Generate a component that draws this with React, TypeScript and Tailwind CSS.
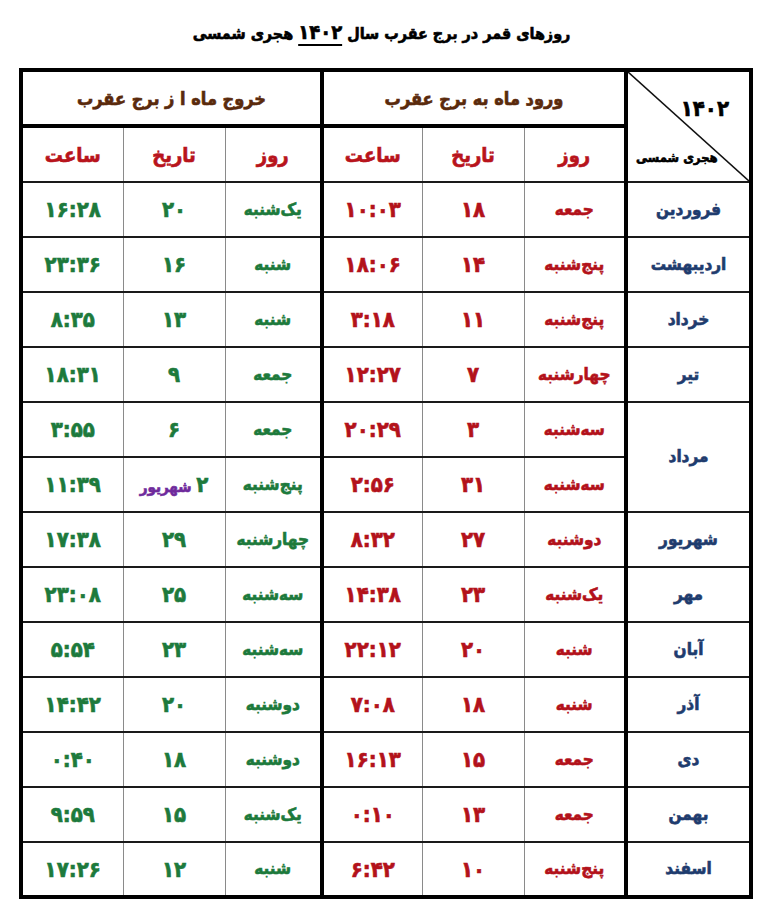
import React from "react";

type Row = {
  month?: string;
  span?: number;
  inDay: string;
  inDate: string;
  inTime: string;
  outDay: string;
  outDate: string;
  outTime: string;
  outDateNote?: string;
};

const ROWS: Row[] = [
  { month: "فروردین", inDay: "جمعه", inDate: "۱۸", inTime: "۱۰:۰۳", outDay: "یک‌شنبه", outDate: "۲۰", outTime: "۱۶:۲۸" },
  { month: "اردیبهشت", inDay: "پنج‌شنبه", inDate: "۱۴", inTime: "۱۸:۰۶", outDay: "شنبه", outDate: "۱۶", outTime: "۲۳:۳۶" },
  { month: "خرداد", inDay: "پنج‌شنبه", inDate: "۱۱", inTime: "۳:۱۸", outDay: "شنبه", outDate: "۱۳", outTime: "۸:۳۵" },
  { month: "تیر", inDay: "چهارشنبه", inDate: "۷", inTime: "۱۲:۲۷", outDay: "جمعه", outDate: "۹", outTime: "۱۸:۳۱" },
  { month: "مرداد", span: 2, inDay: "سه‌شنبه", inDate: "۳", inTime: "۲۰:۲۹", outDay: "جمعه", outDate: "۶", outTime: "۳:۵۵" },
  { inDay: "سه‌شنبه", inDate: "۳۱", inTime: "۲:۵۶", outDay: "پنج‌شنبه", outDate: "۲", outDateNote: "شهریور", outTime: "۱۱:۳۹" },
  { month: "شهریور", inDay: "دوشنبه", inDate: "۲۷", inTime: "۸:۳۲", outDay: "چهارشنبه", outDate: "۲۹", outTime: "۱۷:۳۸" },
  { month: "مهر", inDay: "یک‌شنبه", inDate: "۲۳", inTime: "۱۴:۳۸", outDay: "سه‌شنبه", outDate: "۲۵", outTime: "۲۳:۰۸" },
  { month: "آبان", inDay: "شنبه", inDate: "۲۰", inTime: "۲۲:۱۲", outDay: "سه‌شنبه", outDate: "۲۳", outTime: "۵:۵۴" },
  { month: "آذر", inDay: "شنبه", inDate: "۱۸", inTime: "۷:۰۸", outDay: "دوشنبه", outDate: "۲۰", outTime: "۱۴:۴۲" },
  { month: "دی", inDay: "جمعه", inDate: "۱۵", inTime: "۱۶:۱۳", outDay: "دوشنبه", outDate: "۱۸", outTime: "۰:۴۰" },
  { month: "بهمن", inDay: "جمعه", inDate: "۱۳", inTime: "۰:۱۰", outDay: "یک‌شنبه", outDate: "۱۵", outTime: "۹:۵۹" },
  { month: "اسفند", inDay: "پنج‌شنبه", inDate: "۱۰", inTime: "۶:۴۲", outDay: "شنبه", outDate: "۱۲", outTime: "۱۷:۲۶" },
];

const FONT = "[font-family:'DejaVu_Sans_Condensed','DejaVu_Sans',sans-serif]";
// heavier look, the original uses a very black display face
const HEAVY = "[-webkit-text-stroke-width:0.6px]";

export default function App() {
  const cell = "border-b-2 border-b-[#1a1a1a] border-l border-l-[#8a8a8a] text-center align-middle p-0";

  return (
    <div dir="rtl" className={`bg-white w-[763px] h-[900px] ${FONT} ${HEAVY} font-bold`}>
      {/* Title */}
      <div className="h-[68px] flex items-center justify-center pb-[4px]">
        <h1 className="text-[16px] text-black tracking-tight">
          روزهای قمر در برج عقرب سال{" "}
          <span className="underline underline-offset-[5px] decoration-2 text-[20px]">۱۴۰۲</span>{" "}
          هجری شمسی
        </h1>
      </div>

      <table className="mr-[10px] w-[730px] table-fixed border-collapse border-4 border-black">
        <colgroup>
          <col className="w-[125px]" />
          <col className="w-[102px]" />
          <col className="w-[102px]" />
          <col className="w-[100px]" />
          <col className="w-[97px]" />
          <col className="w-[102px]" />
          <col className="w-[102px]" />
        </colgroup>
        <thead>
          <tr className="h-[56px]">
            <th rowSpan={2} className="relative border-l-4 border-l-black border-b-2 border-b-[#1a1a1a] p-0">
              <svg className="absolute inset-0 w-full h-full" viewBox="0 0 100 100" preserveAspectRatio="none">
                <line x1="0" y1="0" x2="100" y2="100" stroke="#111" strokeWidth="1.6" vectorEffect="non-scaling-stroke" />
              </svg>
              <span className="absolute right-[20px] top-[20px] text-[22px] text-black">۱۴۰۲</span>
              <span className="absolute left-[8px] bottom-[14px] text-[13px] text-black whitespace-nowrap">هجری شمسی</span>
            </th>
            <th colSpan={3} className="border-l-4 border-l-black border-b-4 border-b-black text-[18px] text-[#5a2a0c] font-bold">
              ورود ماه به برج عقرب
            </th>
            <th colSpan={3} className="border-b-4 border-b-black text-[18px] text-[#5a2a0c] font-bold">
              خروج ماه ا ز برج عقرب
            </th>
          </tr>
          <tr className="h-[56px]">
            <th className={`${cell} text-[20px] text-[#b8141c]`}>روز</th>
            <th className={`${cell} text-[20px] text-[#b8141c]`}>تاریخ</th>
            <th className={`${cell} !border-l-4 !border-l-black text-[20px] text-[#b8141c]`}>ساعت</th>
            <th className={`${cell} text-[20px] text-[#b8141c]`}>روز</th>
            <th className={`${cell} text-[20px] text-[#b8141c]`}>تاریخ</th>
            <th className={`${cell} text-[20px] text-[#b8141c]`}>ساعت</th>
          </tr>
        </thead>
        <tbody>
          {ROWS.map((r, i) => (
            <tr key={i} className="h-[55px]">
              {r.month && (
                <td rowSpan={r.span ?? 1} className="border-l-4 border-l-black border-b-2 border-b-[#1a1a1a] text-center text-[17px] text-[#1f3c6e]">
                  {r.month}
                </td>
              )}
              <td className={`${cell} text-[17px] text-[#b3121b]`}>{r.inDay}</td>
              <td className={`${cell} text-[22px] text-[#b3121b]`}>{r.inDate}</td>
              <td className={`${cell} !border-l-4 !border-l-black text-[22px] text-[#b3121b]`}>{r.inTime}</td>
              <td className={`${cell} text-[17px] text-[#1d7a3c]`}>{r.outDay}</td>
              <td className={`${cell} text-[22px] text-[#1d7a3c]`}>
                {r.outDate}
                {r.outDateNote && <span className="text-[15px] text-[#6f2a9c]"> {r.outDateNote}</span>}
              </td>
              <td className={`${cell} text-[22px] text-[#1d7a3c]`}>{r.outTime}</td>
            </tr>
          ))}
        </tbody>
      </table>
    </div>
  );
}
